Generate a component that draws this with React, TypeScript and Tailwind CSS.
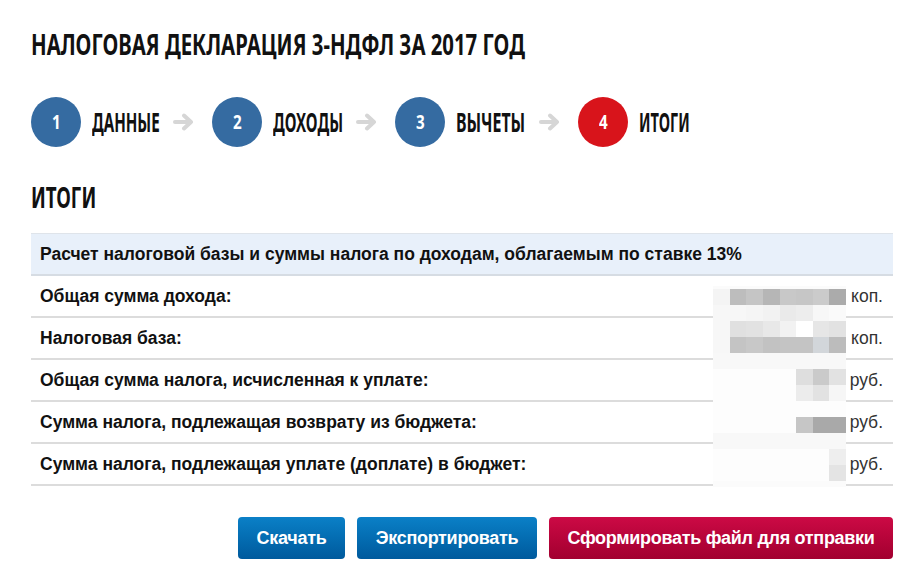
import React from "react";

const steps = [
  { n: "1", label: "ДАННЫЕ", w: "w-[68px]", sc: "scale-x-[0.58]", active: false },
  { n: "2", label: "ДОХОДЫ", w: "w-[70px]", sc: "scale-x-[0.58]", active: false },
  { n: "3", label: "ВЫЧЕТЫ", w: "w-[70px]", sc: "scale-x-[0.61]", active: false },
  { n: "4", label: "ИТОГИ", w: "w-[60px]", sc: "scale-x-[0.56]", active: true },
];

const rows = [
  { label: "Общая сумма дохода:", unit: "коп." },
  { label: "Налоговая база:", unit: "коп." },
  { label: "Общая сумма налога, исчисленная к уплате:", unit: "руб." },
  { label: "Сумма налога, подлежащая возврату из бюджета:", unit: "руб." },
  { label: "Сумма налога, подлежащая уплате (доплате) в бюджет:", unit: "руб." },
];

// mosaic over the hidden amounts, 8 x 12 cells
const W = "#fdfdfd";
const mosaic: string[][] = [
  ["#f4f4f4", "#bdbdbd", "#c5c5c5", "#b6b6b6", "#c8c8c8", "#c6c6c6", "#cbcbcb", "#ababab"],
  ["#f7f7f7", "#f7f7f7", "#f5f5f5", "#f2f2f2", "#eaeaea", "#ededed", "#f7f7f7", "#fafafa"],
  ["#f7f7f7", "#e0e0e0", "#e2e2e2", "#e8e8e8", "#f2f2f2", "#ffffff", "#e6e6e6", "#e2e2e2"],
  ["#f7f7f7", "#c4c4c4", "#c8c8c8", "#c2c2c2", "#c4c4c4", "#c4c4c4", "#d2d6da", "#bcbcbc"],
  ["#f8f8f8", "#f8f8f8", "#f8f8f8", "#f8f8f8", "#f8f8f8", "#f8f8f8", "#f8f8f8", "#f8f8f8"],
  [W, W, W, W, W, "#dedede", "#cacaca", "#e2e2e2"],
  [W, W, W, W, W, "#ececec", "#e2e2e2", "#f6f6f6"],
  [W, W, W, W, W, W, W, W],
  [W, W, W, W, W, "#c6c6c6", "#a9a9a9", "#a9a9a9"],
  ["#f8f8f8", "#f8f8f8", "#f8f8f8", "#f8f8f8", "#f8f8f8", "#f8f8f8", "#f8f8f8", "#f8f8f8"],
  [W, W, W, W, W, W, W, "#eeeeee"],
  [W, W, W, W, W, W, W, "#e4e4e4"],
];

function Arrow() {
  return (
    <svg width="22" height="18" viewBox="0 0 22 18" fill="none" aria-hidden="true">
      <path d="M2 9h15" stroke="#d6d6d6" strokeWidth="4" strokeLinecap="round" />
      <path d="M11 2.5l7 6.5-7 6.5" stroke="#d6d6d6" strokeWidth="4" strokeLinecap="round" strokeLinejoin="round" />
    </svg>
  );
}

export default function App() {
  // no condensed face installed, so the display type is squeezed horizontally
  const cond = "font-['Noto_Sans',sans-serif] font-bold inline-block origin-left whitespace-nowrap";
  const btn = "h-[42px] rounded-[4px] bg-gradient-to-b text-white text-[18px] font-bold tracking-[-0.3px]";

  return (
    <div className="w-[908px] h-[583px] bg-white pl-[31px] pr-[15px] pt-[30px] font-['Liberation_Sans',Arial,sans-serif] overflow-hidden">
      <h1 className="h-[28px] text-[28px] leading-[28px] text-[#111]">
        <span className={`${cond} scale-x-[0.726]`}>НАЛОГОВАЯ ДЕКЛАРАЦИЯ 3-НДФЛ ЗА 2017 ГОД</span>
      </h1>

      {/* Steps */}
      <div className="mt-[39px] flex items-center h-[50px]">
        {steps.map((s, i) => (
          <div key={s.n} className="flex items-center">
            <div
              className={`w-[50px] h-[50px] rounded-full flex items-center justify-center text-white text-[19px] font-['Noto_Sans',sans-serif] font-bold ${
                s.active ? "bg-[#d8141b]" : "bg-[#356ba1]"
              }`}
            >
              <span className="inline-block scale-x-[0.8]">{s.n}</span>
            </div>
            <div className={`ml-[11px] ${s.w} text-[26px] leading-none text-[#111]`}>
              <span className={`${cond} ${s.sc}`}>{s.label}</span>
            </div>
            {i < steps.length - 1 && (
              <div className="ml-[13px] mr-[17px] flex items-center">
                <Arrow />
              </div>
            )}
          </div>
        ))}
      </div>

      <h2 className="mt-[36px] h-[28px] text-[28px] leading-[28px] text-[#111]">
        <span className={`${cond} scale-x-[0.67]`}>ИТОГИ</span>
      </h2>

      {/* Results table */}
      <div className="relative mt-[22px] border-t border-[#dfe4ea]">
        <div className="h-[42px] bg-[#e8f0fa] border-b-2 border-[#d6dce3] flex items-center pl-[9px] text-[17.5px] font-bold text-[#111]">
          Расчет налоговой базы и суммы налога по доходам, облагаемым по ставке 13%
        </div>
        {rows.map((r) => (
          <div
            key={r.label}
            className="h-[42px] border-b-2 border-[#dcdcdc] flex items-center justify-between pl-[9px] pr-[10px] text-[17.5px]"
          >
            <span className="font-bold text-[#111]">{r.label}</span>
            <span className="text-[#333]">{r.unit}</span>
          </div>
        ))}

        <div className="absolute left-[682px] top-[52px] w-[133px] h-[201px] bg-[#fbfbfb] pt-[3px]">
          <div className="grid grid-cols-8">
            {mosaic.flat().map((c, i) => (
              <div key={i} className="h-[16px]" style={{ backgroundColor: c }} />
            ))}
          </div>
        </div>
      </div>

      {/* Actions */}
      <div className="mt-[31px] flex justify-end gap-[12px]">
        <button type="button" className={`${btn} w-[107px] from-[#0b80c7] to-[#005a9d]`}>
          Скачать
        </button>
        <button type="button" className={`${btn} w-[180px] from-[#0b80c7] to-[#005a9d]`}>
          Экспортировать
        </button>
        <button type="button" className={`${btn} w-[344px] from-[#cc0a45] to-[#a2002f]`}>
          Сформировать файл для отправки
        </button>
      </div>
    </div>
  );
}
